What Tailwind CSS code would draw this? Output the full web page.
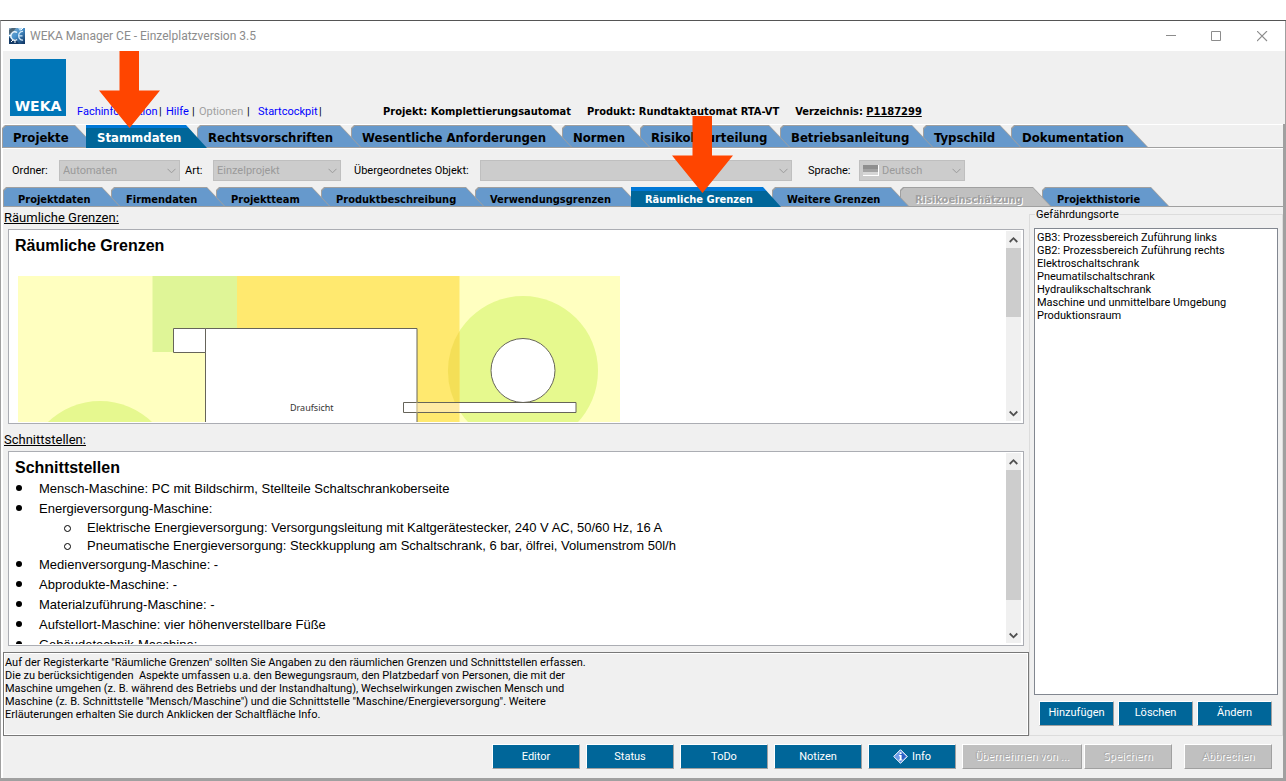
<!DOCTYPE html>
<html lang="de">
<head>
<meta charset="utf-8">
<title>WEKA Manager CE - Einzelplatzversion 3.5</title>
<script src="https://cdn.jsdelivr.net/npm/@tailwindcss/browser@4"></script>
</head>
<body class="bg-white font-[Roboto,sans-serif] text-[11px] leading-[13px] text-black">
<div class="flex h-screen min-h-[600px] flex-col pt-5">
<div class="relative flex min-h-0 flex-1 flex-col border-t border-b-[3px] border-l border-t-[#555555] border-b-[#a0a0a0] border-l-[#a0a0a0] bg-[#f0f0f0]">

  <!-- Title bar -->
  <div class="flex h-[30px] items-center border-r border-[#a0a0a0] bg-white pl-2">
    <svg class="size-4" viewBox="0 0 16 16" aria-hidden="true">
      <defs><linearGradient id="app" x1="0" y1="0" x2="1" y2="1"><stop offset="0" stop-color="#8aa9bf"/><stop offset=".45" stop-color="#4a94cf"/><stop offset="1" stop-color="#0b2f5c"/></linearGradient></defs>
      <rect width="16" height="16" fill="url(#app)"/>
      <path d="M0 9l4 3 3-1 3 5H0z" fill="#143a66"/>
      <path d="M0 2l3-2h4L3 5 0 6z" fill="#4d6678"/>
      <path d="M9 0h5l-3 3z" fill="#b9dcf4"/>
      <path d="M8 4.500A3.800 4.300 0 1 0 8 11.500" fill="none" stroke="#e8f3fb" stroke-width="1.500"/>
      <path d="M14 3.500A3.800 4.300 0 1 0 14 12M10 7.800h3.500" fill="none" stroke="#cfe6f7" stroke-width="1.300"/>
      <path d="M2 14l2-2M12 2l2-2M0 7.500h2M5 14h2" stroke="#fff" stroke-width="1"/>
    </svg>
    <h1 class="ml-[5px] flex-1 text-[12px] leading-4 text-[#8c8c8c]">WEKA Manager CE - Einzelplatzversion 3.5</h1>
    <button class="flex h-full w-[45px] items-center justify-center" aria-label="Minimieren"><svg class="size-[11px]" viewBox="0 0 11 11"><path d="M0 4.500h10" stroke="#8c8c8c"/></svg></button>
    <button class="flex h-full w-[45px] items-center justify-center" aria-label="Maximieren"><svg class="size-[11px]" viewBox="0 0 11 11"><path d="M.5.5h9v9h-9z" fill="none" stroke="#8c8c8c"/></svg></button>
    <button class="flex h-full w-[46px] items-center justify-center" aria-label="Schließen"><svg class="size-[11px]" viewBox="0 0 11 11"><path d="M0 0l10 10M10 0L0 10" stroke="#8c8c8c" stroke-width="1.100"/></svg></button>
  </div>

  <!-- Header -->
  <header class="flex h-[73px] shrink-0 items-end border-r border-l-2 border-r-[#a0a0a0] border-l-white pb-1.5 pl-[7px]">
    <div class="mb-0.5 flex h-[57px] w-14 items-end justify-center bg-[#0076b8] pb-0.5 font-['DejaVu_Sans',sans-serif] text-[14px] leading-4 font-bold text-white">WEKA</div>
    <nav class="flex w-[317px] pl-[11px] whitespace-pre" aria-label="Hilfsfunktionen">
      <a href="#" class="w-[82px] text-[#0000ff]">Fachinformation</a><span class="w-[7px]">|</span><a href="#" class="w-[26px] text-[#0000ff]">Hilfe</a><span class="w-[7px]">|</span><span class="w-[48px] text-[#a0a0a0]">Optionen</span><span class="w-[11px]">|</span><a href="#" class="w-[61px] text-[#0000ff]">Startcockpit</a><span>|</span>
    </nav>
    <p class="flex gap-4 font-['DejaVu_Sans_Condensed','DejaVu_Sans',sans-serif] font-bold whitespace-nowrap"><span>Projekt: Komplettierungsautomat</span><span>Produkt: Rundtaktautomat RTA-VT</span><span>Verzeichnis: <a href="#" class="underline">P1187299</a></span></p>
  </header>

  <div class="flex min-h-0 flex-1 flex-col border-r-[3px] border-l-2 border-r-[#a0a0a0] border-l-white">
  <!-- Main tabs -->
  <nav class="-ml-px flex h-[25px] shrink-0 border-t border-b border-t-white border-b-white font-['DejaVu_Sans_Condensed','DejaVu_Sans',sans-serif] text-[13px] leading-4 font-bold whitespace-nowrap" aria-label="Hauptregister">
    <div class="flex flex-1 border-b border-[#a0a0a0]">
    <button class="relative z-9 -mr-[10px] h-[22px] w-[94px] bg-[#a0a0a0] [clip-path:polygon(0_3px,3px_0,calc(100%-21px)_0,100%_100%,0_100%)]"><span class="mx-px mt-px flex h-[21px] items-center bg-[#6699cc] pl-[10px] pt-[3px] [clip-path:polygon(0_3px,3px_0,calc(100%-20px)_0,100%_100%,0_100%)]">Projekte</span></button>
    <button class="relative z-10 -mr-[10px] flex h-[23px] w-[121px] items-center bg-[linear-gradient(#0078d7_3px,#006699_3px)] pl-[11px] pt-[3px] text-white [clip-path:polygon(0_0,calc(100%-21px)_0,100%_100%,0_100%)]" aria-current="page">Stammdaten</button>
    <button class="relative z-8 -mr-[10px] h-[22px] w-[164px] bg-[#a0a0a0] [clip-path:polygon(0_3px,3px_0,calc(100%-21px)_0,100%_100%,0_100%)]"><span class="mx-px mt-px flex h-[21px] items-center bg-[#6699cc] pl-[10px] pt-[3px] [clip-path:polygon(0_3px,3px_0,calc(100%-20px)_0,100%_100%,0_100%)]">Rechtsvorschriften</span></button>
    <button class="relative z-7 -mr-[10px] h-[22px] w-[221px] bg-[#a0a0a0] [clip-path:polygon(0_3px,3px_0,calc(100%-21px)_0,100%_100%,0_100%)]"><span class="mx-px mt-px flex h-[21px] items-center bg-[#6699cc] pl-[10px] pt-[3px] [clip-path:polygon(0_3px,3px_0,calc(100%-20px)_0,100%_100%,0_100%)]">Wesentliche Anforderungen</span></button>
    <button class="relative z-6 -mr-[10px] h-[22px] w-[88px] bg-[#a0a0a0] [clip-path:polygon(0_3px,3px_0,calc(100%-21px)_0,100%_100%,0_100%)]"><span class="mx-px mt-px flex h-[21px] items-center bg-[#6699cc] pl-[10px] pt-[3px] [clip-path:polygon(0_3px,3px_0,calc(100%-20px)_0,100%_100%,0_100%)]">Normen</span></button>
    <button class="relative z-5 -mr-[10px] h-[22px] w-[150px] bg-[#a0a0a0] [clip-path:polygon(0_3px,3px_0,calc(100%-21px)_0,100%_100%,0_100%)]"><span class="mx-px mt-px flex h-[21px] items-center bg-[#6699cc] pl-[10px] pt-[3px] [clip-path:polygon(0_3px,3px_0,calc(100%-20px)_0,100%_100%,0_100%)]">Risikobeurteilung</span></button>
    <button class="relative z-4 -mr-[10px] h-[22px] w-[153px] bg-[#a0a0a0] [clip-path:polygon(0_3px,3px_0,calc(100%-21px)_0,100%_100%,0_100%)]"><span class="mx-px mt-px flex h-[21px] items-center bg-[#6699cc] pl-[10px] pt-[3px] [clip-path:polygon(0_3px,3px_0,calc(100%-20px)_0,100%_100%,0_100%)]">Betriebsanleitung</span></button>
    <button class="relative z-3 -mr-[10px] h-[22px] w-[98px] bg-[#a0a0a0] [clip-path:polygon(0_3px,3px_0,calc(100%-21px)_0,100%_100%,0_100%)]"><span class="mx-px mt-px flex h-[21px] items-center bg-[#6699cc] pl-[10px] pt-[3px] [clip-path:polygon(0_3px,3px_0,calc(100%-20px)_0,100%_100%,0_100%)]">Typschild</span></button>
    <button class="relative z-2 h-[22px] w-[137px] bg-[#a0a0a0] [clip-path:polygon(0_3px,3px_0,calc(100%-21px)_0,100%_100%,0_100%)]"><span class="mx-px mt-px flex h-[21px] items-center bg-[#6699cc] pl-[10px] pt-[3px] [clip-path:polygon(0_3px,3px_0,calc(100%-20px)_0,100%_100%,0_100%)]">Dokumentation</span></button>
    </div>
  </nav>

  <!-- Filter row -->
  <div class="flex items-center pt-[11px] pb-1.5 pl-[9px] whitespace-nowrap">
    <label for="ordner" class="w-[47px]">Ordner:</label>
    <div class="relative h-[21px] w-[121px]">
      <select id="ordner" disabled class="block size-full appearance-none border border-[#bfbfbf] bg-[#cccccc] px-[3px] text-[#9a9a9a] opacity-100"><option>Automaten</option></select>
      <svg class="absolute top-[8px] right-[4px] h-[6px] w-[9px]" viewBox="0 0 9 6"><path d="M.5.8l4 4 4-4" fill="none" stroke="#9a9a9a"/></svg>
    </div>
    <label for="art" class="w-[33px] pl-[5px]">Art:</label>
    <div class="relative h-[21px] w-[128px]">
      <select id="art" disabled class="block size-full appearance-none border border-[#bfbfbf] bg-[#cccccc] px-[3px] text-[#9a9a9a] opacity-100"><option>Einzelprojekt</option></select>
      <svg class="absolute top-[8px] right-[4px] h-[6px] w-[9px]" viewBox="0 0 9 6"><path d="M.5.8l4 4 4-4" fill="none" stroke="#9a9a9a"/></svg>
    </div>
    <label for="objekt" class="w-[139px] pl-[13px]">Übergeordnetes Objekt:</label>
    <div class="relative h-[21px] w-[312px]">
      <select id="objekt" disabled class="block size-full appearance-none border border-[#bfbfbf] bg-[#cccccc] px-[3px] text-[#9a9a9a] opacity-100"><option></option></select>
      <svg class="absolute top-[8px] right-[4px] h-[6px] w-[9px]" viewBox="0 0 9 6"><path d="M.5.8l4 4 4-4" fill="none" stroke="#9a9a9a"/></svg>
    </div>
    <label for="sprache" class="w-[67px] pl-[16px]">Sprache:</label>
    <div class="relative h-[21px] w-[106px]">
      <select id="sprache" disabled class="block size-full appearance-none border border-[#bfbfbf] bg-[#cccccc] pl-[22px] text-[#9a9a9a] opacity-100"><option>Deutsch</option></select>
      <svg class="absolute top-[5px] left-[4px] h-[11px] w-4" viewBox="0 0 16 11"><path d="M0 0h16v11H0z" fill="#fff"/><path d="M0 0h15v4H0z" fill="#8f8f8f"/><path d="M0 4h15v3H0z" fill="#a3a3a3"/><path d="M0 7h15v3H0z" fill="#d6d6d6"/></svg>
      <svg class="absolute top-[8px] right-[4px] h-[6px] w-[9px]" viewBox="0 0 9 6"><path d="M.5.8l4 4 4-4" fill="none" stroke="#9a9a9a"/></svg>
    </div>
  </div>

  <!-- Sub tabs -->
  <nav class="flex h-5 shrink-0 border-b border-[#a0a0a0] font-['DejaVu_Sans_Condensed','DejaVu_Sans',sans-serif] font-bold whitespace-nowrap" aria-label="Stammdaten">
    <button class="relative z-9 -mr-[9px] h-[19px] w-[117px] bg-[#a0a0a0] [clip-path:polygon(0_3px,3px_0,calc(100%-18px)_0,100%_100%,0_100%)]"><span class="mx-px mt-px flex h-[18px] items-center bg-[#6699cc] pl-[14px] pt-[4px] [clip-path:polygon(0_3px,3px_0,calc(100%-17px)_0,100%_100%,0_100%)]">Projektdaten</span></button>
    <button class="relative z-8 -mr-[9px] h-[19px] w-[114px] bg-[#a0a0a0] [clip-path:polygon(0_3px,3px_0,calc(100%-18px)_0,100%_100%,0_100%)]"><span class="mx-px mt-px flex h-[18px] items-center bg-[#6699cc] pl-[14px] pt-[4px] [clip-path:polygon(0_3px,3px_0,calc(100%-17px)_0,100%_100%,0_100%)]">Firmendaten</span></button>
    <button class="relative z-7 -mr-[9px] h-[19px] w-[114px] bg-[#a0a0a0] [clip-path:polygon(0_3px,3px_0,calc(100%-18px)_0,100%_100%,0_100%)]"><span class="mx-px mt-px flex h-[18px] items-center bg-[#6699cc] pl-[14px] pt-[4px] [clip-path:polygon(0_3px,3px_0,calc(100%-17px)_0,100%_100%,0_100%)]">Projektteam</span></button>
    <button class="relative z-6 -mr-[9px] h-[19px] w-[163px] bg-[#a0a0a0] [clip-path:polygon(0_3px,3px_0,calc(100%-18px)_0,100%_100%,0_100%)]"><span class="mx-px mt-px flex h-[18px] items-center bg-[#6699cc] pl-[14px] pt-[4px] [clip-path:polygon(0_3px,3px_0,calc(100%-17px)_0,100%_100%,0_100%)]">Produktbeschreibung</span></button>
    <button class="relative z-5 -mr-[9px] h-[19px] w-[165px] bg-[#a0a0a0] [clip-path:polygon(0_3px,3px_0,calc(100%-18px)_0,100%_100%,0_100%)]"><span class="mx-px mt-px flex h-[18px] items-center bg-[#6699cc] pl-[14px] pt-[4px] [clip-path:polygon(0_3px,3px_0,calc(100%-17px)_0,100%_100%,0_100%)]">Verwendungsgrenzen</span></button>
    <button class="relative z-10 -mr-[9px] flex h-5 w-[150px] items-center bg-[linear-gradient(#0078d7_4px,#006699_4px)] pl-[14px] pt-[4px] text-white [clip-path:polygon(0_0,calc(100%-18px)_0,100%_100%,0_100%)]" aria-current="page">Räumliche Grenzen</button>
    <button class="relative z-4 -mr-[9px] h-[19px] w-[137px] bg-[#a0a0a0] [clip-path:polygon(0_3px,3px_0,calc(100%-18px)_0,100%_100%,0_100%)]"><span class="mx-px mt-px flex h-[18px] items-center bg-[#6699cc] pl-[14px] pt-[4px] [clip-path:polygon(0_3px,3px_0,calc(100%-17px)_0,100%_100%,0_100%)]">Weitere Grenzen</span></button>
    <button disabled class="relative z-3 -mr-[9px] h-[19px] w-[151px] bg-[#a0a0a0] [clip-path:polygon(0_3px,3px_0,calc(100%-18px)_0,100%_100%,0_100%)]"><span class="mx-px mt-px flex h-[18px] items-center bg-[#c0c0c0] pl-[14px] pt-[4px] text-[#a0a0a0] [clip-path:polygon(0_3px,3px_0,calc(100%-17px)_0,100%_100%,0_100%)] [text-shadow:1px_1px_0_#fff]">Risikoeinschätzung</span></button>
    <button class="relative z-2 h-[19px] w-[127px] bg-[#a0a0a0] [clip-path:polygon(0_3px,3px_0,calc(100%-18px)_0,100%_100%,0_100%)]"><span class="mx-px mt-px flex h-[18px] items-center bg-[#6699cc] pl-[14px] pt-[4px] [clip-path:polygon(0_3px,3px_0,calc(100%-17px)_0,100%_100%,0_100%)]">Projekthistorie</span></button>
  </nav>

  <!-- Content -->
  <main class="flex min-h-0 flex-1">
    <div class="flex min-w-0 flex-1 flex-col">
      <h2 class="pt-px pb-px pl-px text-[13px] leading-5 underline">Räumliche Grenzen:</h2>
      <section class="mx-[5px] flex min-h-0 flex-1 border border-[#abadb3] bg-white pb-px font-['Liberation_Sans',Arial,sans-serif]">
        <div class="min-w-0 flex-1 overflow-hidden pt-[6px] pl-[6px]">
          <h3 class="text-[16px] leading-5 font-bold">Räumliche Grenzen</h3>
          <svg class="mt-5 ml-[3px] h-[147px] w-[602px]" viewBox="18 276 602 147" role="img" aria-label="Draufsicht">
            <rect x="18" y="276" width="602" height="147" fill="#ffffc0"/>
            <circle cx="100" cy="476" r="75" fill="#e6f88f"/>
            <circle cx="523" cy="371" r="75" fill="#e6f98e"/>
            <rect x="152.500" y="276" width="84.500" height="76" fill="#dff597"/>
            <rect x="237" y="276" width="222.500" height="147" fill="#ffe96f"/>
            <path d="M459.500 331a75 75 0 0 0 0 80z" fill="#f4df57"/>
            <g fill="#fff" stroke="#66645a">
              <path d="M205.500 424V328.500H417V424"/>
              <path d="M173.500 328.500h32v24h-32z"/>
              <circle cx="523" cy="370.500" r="32"/>
              <path d="M403.500 402.500h172.500v10H403.500z"/>
            </g>
            <path d="M417.500 403h42v9h-42z" fill="#ffeaa4"/>
            <path d="M417 402v11" stroke="#b9a86c"/>
            <text x="290" y="411" font-family="Noto Sans, sans-serif" font-size="9" fill="#333">Draufsicht</text>
          </svg>
        </div>
        <div class="my-px mr-[2px] flex w-[15px] flex-col items-center bg-[#f0f0f0]">
          <svg class="h-[17px] w-[9px] shrink-0" viewBox="0 0 9 17"><path d="M.7 11l3.800-3.800L8.300 11" fill="none" stroke="#505050" stroke-width="1.800"/></svg>
          <div class="h-[69px] w-full bg-[#cdcdcd]"></div>
          <svg class="mt-auto h-[17px] w-[9px] shrink-0" viewBox="0 0 9 17"><path d="M.7 7.500l3.800 3.800 3.800-3.800" fill="none" stroke="#505050" stroke-width="1.800"/></svg>
        </div>
      </section>

      <h2 class="pt-1.5 pb-px pl-px text-[13px] leading-5 underline">Schnittstellen:</h2>
      <section class="mx-[5px] flex min-h-0 flex-1 border border-[#abadb3] bg-white pb-px font-['Liberation_Sans',Arial,sans-serif]">
        <div class="min-w-0 flex-1 overflow-hidden pt-[6px] pl-[6px] text-[13px] leading-5">
          <h3 class="mb-px text-[16px] leading-5 font-bold">Schnittstellen</h3>
          <ul class="[&>li]:relative [&>li]:pl-6 [&>li]:before:absolute [&>li]:before:top-[6px] [&>li]:before:left-px [&>li]:before:size-1.5 [&>li]:before:rounded-full [&>li]:before:bg-black">
            <li>Mensch-Maschine: PC mit Bildschirm, Stellteile Schaltschrankoberseite</li>
            <li>Energieversorgung-Maschine:
              <ul class="ml-6 leading-[18px] [&>li]:relative [&>li]:pl-6 [&>li]:before:absolute [&>li]:before:top-[6px] [&>li]:before:left-px [&>li]:before:size-[7px] [&>li]:before:rounded-full [&>li]:before:border [&>li]:before:border-black">
                <li>Elektrische Energieversorgung: Versorgungsleitung mit Kaltgerätestecker, 240 V AC, 50/60 Hz, 16 A</li>
                <li>Pneumatische Energieversorgung: Steckkupplung am Schaltschrank, 6 bar, ölfrei, Volumenstrom 50l/h</li>
              </ul>
            </li>
            <li>Medienversorgung-Maschine: -</li>
            <li>Abprodukte-Maschine: -</li>
            <li>Materialzuführung-Maschine: -</li>
            <li>Aufstellort-Maschine: vier höhenverstellbare Füße</li>
            <li>Gebäudetechnik-Maschine:</li>
          </ul>
        </div>
        <div class="my-px mr-[2px] flex w-[15px] flex-col items-center bg-[#f0f0f0]">
          <svg class="h-[17px] w-[9px] shrink-0" viewBox="0 0 9 17"><path d="M.7 11l3.800-3.800L8.300 11" fill="none" stroke="#505050" stroke-width="1.800"/></svg>
          <div class="h-[130px] w-full bg-[#cdcdcd]"></div>
          <svg class="mt-auto h-[17px] w-[9px] shrink-0" viewBox="0 0 9 17"><path d="M.7 7.500l3.800 3.800 3.800-3.800" fill="none" stroke="#505050" stroke-width="1.800"/></svg>
        </div>
      </section>

      <div class="mt-1.5 border border-[#787878]">
        <p class="h-[82px] border border-white pt-[2px] whitespace-pre">Auf der Registerkarte "Räumliche Grenzen" sollten Sie Angaben zu den räumlichen Grenzen und Schnittstellen erfassen.
Die zu berücksichtigenden  Aspekte umfassen u.a. den Bewegungsraum, den Platzbedarf von Personen, die mit der
Maschine umgehen (z. B. während des Betriebs und der Instandhaltung), Wechselwirkungen zwischen Mensch und
Maschine (z. B. Schnittstelle "Mensch/Maschine") und die Schnittstelle "Maschine/Energieversorgung". Weitere
Erläuterungen erhalten Sie durch Anklicken der Schaltfläche Info.</p>
      </div>
    </div>

    <fieldset class="flex w-[254px] flex-col border border-[#dcdcdc] px-1 pb-[9px]">
      <legend class="ml-px px-px leading-[15px]"><label for="orte">Gefährdungsorte</label></legend>
      <select id="orte" size="7" class="mt-1.5 block w-full min-h-0 flex-1 appearance-none overflow-hidden border border-[#828790] bg-white pt-[2px] pl-0 [&>option]:h-[13px] [&>option]:min-h-0 [&>option]:p-0 [&>option]:pl-[2px] [&>option]:leading-[13px]">
        <option>GB3: Prozessbereich Zuführung links</option>
        <option>GB2: Prozessbereich Zuführung rechts</option>
        <option>Elektroschaltschrank</option>
        <option>Pneumatilschaltschrank</option>
        <option>Hydraulikschaltschrank</option>
        <option>Maschine und unmittelbare Umgebung</option>
        <option>Produktionsraum</option>
      </select>
      <div class="mt-1.5 flex gap-1 pl-[5px] text-white">
        <button class="h-[25px] w-[75px] border border-t-white border-r-[#a0a0a0] border-b-[#a0a0a0] border-l-white bg-[#006699] pb-0.5">Hinzufügen</button>
        <button class="h-[25px] w-[75px] border border-t-white border-r-[#a0a0a0] border-b-[#a0a0a0] border-l-white bg-[#006699] pb-0.5">Löschen</button>
        <button class="h-[25px] w-[75px] border border-t-white border-r-[#a0a0a0] border-b-[#a0a0a0] border-l-white bg-[#006699] pb-0.5">Ändern</button>
      </div>
    </fieldset>
  </main>

  <!-- Action bar -->
  <footer class="flex justify-end gap-1.5 pt-2 pr-[11px] pb-[9px] text-white">
    <button class="h-[25px] w-[88px] border border-t-white border-r-[#a0a0a0] border-b-[#a0a0a0] border-l-white bg-[#006699]">Editor</button>
    <button class="h-[25px] w-[88px] border border-t-white border-r-[#a0a0a0] border-b-[#a0a0a0] border-l-white bg-[#006699]">Status</button>
    <button class="h-[25px] w-[88px] border border-t-white border-r-[#a0a0a0] border-b-[#a0a0a0] border-l-white bg-[#006699]">ToDo</button>
    <button class="h-[25px] w-[88px] border border-t-white border-r-[#a0a0a0] border-b-[#a0a0a0] border-l-white bg-[#006699]">Notizen</button>
    <button class="flex h-[25px] w-[88px] items-center justify-center gap-1 border border-t-white border-r-[#a0a0a0] border-b-[#a0a0a0] border-l-white bg-[#006699]">
      <svg class="size-[15px]" viewBox="0 0 15 15" aria-hidden="true"><path d="M7.500.7l6.800 6.800-6.800 6.800L.7 7.500z" fill="#6d9bea" stroke="#fff" stroke-width="1"/><path d="M7.500 2l5.500 5.500-5.500 5.500z" fill="#2a5fc6"/><path d="M6.700 3.200h1.900v1.700H6.700zM5.900 6h2.700v4.400h.9v1.200H5.800v-1.200h1V7.200h-.9z" fill="#fff"/></svg>
      Info</button>
    <div class="mr-1.5 flex gap-0.5">
      <button disabled class="h-[25px] w-[120px] border border-t-white border-r-[#a0a0a0] border-b-[#a0a0a0] border-l-white bg-[#c0c0c0] text-[#acacac] [text-shadow:1px_1px_0_#fff]">Übernehmen von ...</button>
      <button disabled class="h-[25px] w-[88px] border border-t-white border-r-[#a0a0a0] border-b-[#a0a0a0] border-l-white bg-[#c0c0c0] font-['DejaVu_Sans_Condensed','DejaVu_Sans',sans-serif] text-[#acacac] [text-shadow:1px_1px_0_#fff]">Speichern</button>
    </div>
    <button disabled class="h-[25px] w-[88px] border border-t-white border-r-[#a0a0a0] border-b-[#a0a0a0] border-l-white bg-[#c0c0c0] text-[#acacac] [text-shadow:1px_1px_0_#fff]">Abbrechen</button>
  </footer>
  </div>

  <!-- Callout arrows over the tabs -->
  <svg class="absolute top-[30px] left-[98px] z-20 h-[77px] w-[61px]" viewBox="0 0 61 77" aria-hidden="true"><path d="M20.500 0h19.500v39.500h21L30.500 77 0 39.500h20.500z" fill="#ff4500"/></svg>
  <svg class="absolute top-[95px] left-[671px] z-20 h-[77px] w-[61px]" viewBox="0 0 61 77" aria-hidden="true"><path d="M20.500 0h19.500v39.500h21L30.500 77 0 39.500h20.500z" fill="#ff4500"/></svg>
</div>
</div>
</body>
</html>
